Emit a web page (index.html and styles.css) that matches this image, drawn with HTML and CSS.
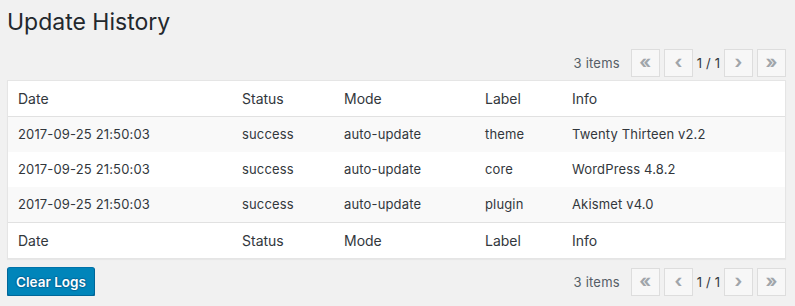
FILE: index.html
```html
<!DOCTYPE html>
<html>
<head>
<meta charset="utf-8">
<link rel="stylesheet" href="styles.css">
</head>
<body>
<div class="wrap">
  <h1 class="title">Update History</h1>
  <div class="tablenav top">
    <div class="pages">
      <span class="count">3 items</span>
      <span class="pg">&laquo;</span>
      <span class="pg">&lsaquo;</span>
      <span class="current">1 / 1</span>
      <span class="pg">&rsaquo;</span>
      <span class="pg">&raquo;</span>
    </div>
  </div>
  <table class="logs">
    <thead>
      <tr><th class="c-date">Date</th><th class="c-status">Status</th><th class="c-mode">Mode</th><th class="c-label">Label</th><th>Info</th></tr>
    </thead>
    <tbody>
      <tr class="alt"><td>2017-09-25 21:50:03</td><td>success</td><td>auto-update</td><td>theme</td><td>Twenty Thirteen v2.2</td></tr>
      <tr><td>2017-09-25 21:50:03</td><td>success</td><td>auto-update</td><td>core</td><td>WordPress 4.8.2</td></tr>
      <tr class="alt"><td>2017-09-25 21:50:03</td><td>success</td><td>auto-update</td><td>plugin</td><td>Akismet v4.0</td></tr>
    </tbody>
    <tfoot>
      <tr><th>Date</th><th>Status</th><th>Mode</th><th>Label</th><th>Info</th></tr>
    </tfoot>
  </table>
  <div class="tablenav bottom">
    <button class="primary">Clear Logs</button>
    <div class="pages">
      <span class="count">3 items</span>
      <span class="pg">&laquo;</span>
      <span class="pg">&lsaquo;</span>
      <span class="current">1 / 1</span>
      <span class="pg">&rsaquo;</span>
      <span class="pg">&raquo;</span>
    </div>
  </div>
</div>
</body>
</html>
```
FILE: styles.css
```css
html, body {
  margin: 0;
  padding: 0;
  background: #f1f1f1;
}
body {
  font-family: Inter, "Liberation Sans", sans-serif;
  color: #32373c;
  font-size: 13px;
}
.wrap {
  width: 779px;
  padding-left: 7px;
}
.title {
  margin: 8px 0 0 0;
  font-size: 23px;
  font-weight: 400;
  line-height: 29px;
  color: #23282d;
}
.tablenav {
  display: flex;
  align-items: center;
}
.tablenav.top {
  margin-top: 12px;
  margin-bottom: 3px;
  justify-content: flex-end;
}
.tablenav.bottom {
  margin-top: 8px;
  justify-content: space-between;
}
.pages {
  display: flex;
  align-items: center;
}
.count {
  font-size: 13px;
  letter-spacing: 0.2px;
  margin-right: 7px;
  color: #555d66;
}
.pg {
  box-sizing: border-box;
  width: 29px;
  height: 28px;
  border: 1px solid #ddd;
  background: #f7f7f7;
  color: #a0a5aa;
  font-size: 18px;
  font-weight: 700;
  line-height: 24px;
  text-align: center;
  margin-left: 4px;
}
.current {
  font-size: 13px;
  word-spacing: 0.3px;
  margin-left: 4px;
  margin-right: 0;
  color: #32373c;
}
.logs {
  width: 779px;
  border-collapse: separate;
  border-spacing: 0;
  border: 1px solid #e5e5e5;
  background: #fff;
  box-shadow: 0 1px 1px rgba(0,0,0,.04);
  table-layout: fixed;
}
.logs th, .logs td {
  text-align: left;
  padding: 8px 10px;
  line-height: 19px;
  height: 19px;
  white-space: nowrap;
}
.logs th {
  font-size: 14px;
  font-weight: 400;
  color: #32373c;
}
.logs td {
  font-size: 13px;
  letter-spacing: 0.15px;
  color: #32373c;
}
.logs thead th { border-bottom: 1px solid #e1e1e1; }
.logs tfoot th { border-top: 1px solid #e1e1e1; }
.c-date { width: 204px; }
.c-status { width: 82px; }
.c-mode { width: 121px; }
.c-label { width: 67px; }
.alt td { background: #f9f9f9; }
.primary {
  box-sizing: border-box;
  width: 88px;
  height: 29px;
  background: #0085ba;
  border: 1px solid #0073aa;
  border-color: #0073aa #006799 #006799;
  border-radius: 3px;
  box-shadow: 0 1px 0 #006799;
  color: #fff;
  font-family: Inter, "Liberation Sans", sans-serif;
  font-size: 13.5px;
  font-weight: 600;
  white-space: nowrap;
  text-shadow: 0 -1px 1px #006799, 1px 0 1px #006799, 0 1px 1px #006799, -1px 0 1px #006799;
  padding: 0;
}
```
